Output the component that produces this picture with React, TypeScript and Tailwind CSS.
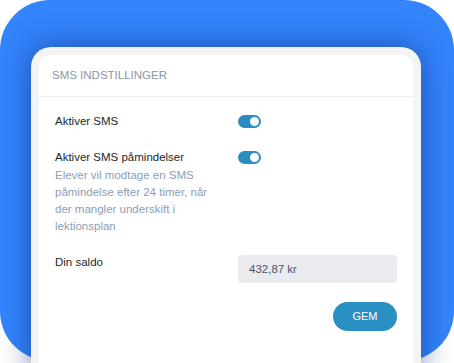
import React from "react";

function Toggle() {
  return (
    <div className="relative h-[13px] w-[23px] rounded-full bg-[#2b8cc3]">
      <div className="absolute right-[2px] top-[2px] h-[9px] w-[9px] rounded-full bg-white" />
    </div>
  );
}

export default function App() {
  return (
    <div className="h-[363px] w-[454px] overflow-hidden bg-white font-['Liberation_Sans',Arial,sans-serif]">
      <div className="h-[361px] rounded-[50px] bg-[#3384fd] pt-[47px] pl-[31px]">
        <div className="h-[330px] w-[390px] rounded-t-[20px] bg-[#f3f4f6] px-[8px] pt-[8px] shadow-[0_0_30px_rgba(10,35,110,0.55)]">
          <div className="h-full rounded-t-[12px] bg-white">
            <div className="flex h-[42px] items-center border-b border-[#eceef1] px-[13px] text-[11.5px] text-[#8b95a5]">
              SMS INDSTILLINGER
            </div>
            <div className="flex flex-col px-4 pt-[16px] text-[11.5px] leading-[17px] text-[#262626]">
              <div className="grid grid-cols-[183px_159px]">
                <div>Aktiver SMS</div>
                <div className="mt-[2px]">
                  <Toggle />
                </div>
              </div>
              <div className="mt-[18.5px] grid grid-cols-[183px_159px]">
                <div>
                  <div>Aktiver SMS påmindelser</div>
                  <div className="mt-px w-[160px] text-[#8d9db6]">
                    Elever vil modtage en SMS påmindelse efter 24 timer, når der mangler underskift i lektionsplan
                  </div>
                </div>
                <div className="mt-[2px]">
                  <Toggle />
                </div>
              </div>
              <div className="mt-[19.5px] grid grid-cols-[183px_159px]">
                <div>Din saldo</div>
                <div className="mt-px flex h-[28px] items-center rounded-[4px] bg-[#e9ebef] pl-[11px] text-[#4b5467]">
                  432,87 kr
                </div>
              </div>
              <div className="mt-[19px] flex justify-end">
                <button className="flex h-[29px] w-[64px] items-center justify-center rounded-full bg-[#2a8fc2] text-[11px] font-medium text-white">
                  GEM
                </button>
              </div>
            </div>
          </div>
        </div>
      </div>
    </div>
  );
}
